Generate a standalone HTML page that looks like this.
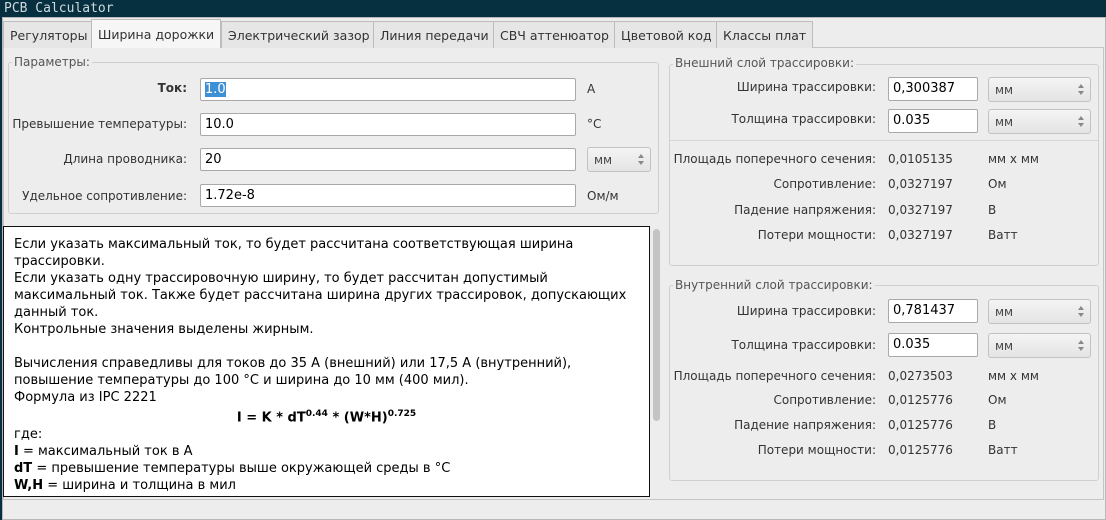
<!DOCTYPE html><html><head><meta charset="utf-8"><style>
*{box-sizing:border-box;margin:0;padding:0}
body{width:1106px;height:520px;background:#06303f;font-family:"DejaVu Sans","Liberation Sans",sans-serif;font-size:12px;color:#333;position:relative;overflow:hidden}
.a{position:absolute;white-space:nowrap}
.title{left:4px;top:1px;color:#cfd8dc;font-family:"DejaVu Sans Mono","Liberation Mono",monospace;font-size:13px}
.win{left:2px;top:17px;width:1104px;height:503px;background:#ededed;border:1px solid #b8b8b8}
.tab{top:21px;height:27px;background:#e6e6e6;border:1px solid #bcbcbc;border-bottom:none;padding:6px 6px 0;color:#333;font-size:12.5px}
.tab.on{top:19px;height:29px;background:#f6f6f6;padding-top:7px}
.page{left:3px;top:47px;width:1101px;height:453px;border:1px solid #c4c4c4;background:#ededed}
.grp{border:1px solid #d0d0d0;border-radius:3px}
.gt{background:#ededed;padding:0 2px;color:#555}
.in{background:#fff;border:1px solid #a9a9a9;border-radius:2px;height:23px;padding:3px 4px;color:#000;font-size:13px}
.cb{background:linear-gradient(#f4f4f4,#e4e4e4);border:1px solid #c2c2c2;border-radius:3px;height:25px;padding:5px 6px;color:#444;font-size:12px}
.cb:after{content:"";position:absolute;right:6px;top:6px;width:0;height:0;border-left:3px solid transparent;border-right:3px solid transparent;border-bottom:4px solid #888;}
.cb:before{content:"";position:absolute;right:6px;top:13px;width:0;height:0;border-left:3px solid transparent;border-right:3px solid transparent;border-top:4px solid #888;}
.lbl{text-align:right}
.ta{left:3px;top:226px;width:647px;height:271px;background:#fff;border:1px solid #111;padding:9px 10px;color:#000;font-size:13px;line-height:17px;white-space:normal}
</style></head><body>
<div class="a title">PCB Calculator</div>
<div class="a win"></div>
<div class="a page"></div>
<div class="a tab" style="left:3px">Регуляторы</div>
<div class="a tab on" style="left:91px">Ширина дорожки</div>
<div class="a tab" style="left:221px">Электрический зазор</div>
<div class="a tab" style="left:373px">Линия передачи</div>
<div class="a tab" style="left:493px">СВЧ аттенюатор</div>
<div class="a tab" style="left:614px">Цветовой код</div>
<div class="a tab" style="left:716px">Классы плат</div>

<div class="a grp" style="left:8px;top:62px;width:651px;height:152px"></div>
<div class="a gt" style="left:12px;top:55px">Параметры:</div>
<div class="a lbl" style="left:20px;width:167px;top:81px;font-weight:bold">Ток:</div>
<div class="a in" style="left:200px;top:78px;width:376px"><span style="background:#3d8fd6;color:#fff">1.0</span></div>
<div class="a" style="left:587px;top:82px">A</div>
<div class="a lbl" style="left:10px;width:177px;top:117px">Превышение температуры:</div>
<div class="a in" style="left:200px;top:113px;width:376px">10.0</div>
<div class="a" style="left:587px;top:117px">°C</div>
<div class="a lbl" style="left:20px;width:167px;top:152px">Длина проводника:</div>
<div class="a in" style="left:200px;top:148px;width:376px">20</div>
<div class="a cb" style="left:587px;top:147px;width:64px">мм</div>
<div class="a lbl" style="left:10px;width:177px;top:189px">Удельное сопротивление:</div>
<div class="a in" style="left:200px;top:184px;width:376px">1.72e-8</div>
<div class="a" style="left:587px;top:189px">Ом/м</div>

<div class="a ta">Если указать максимальный ток, то будет рассчитана соответствующая ширина трассировки.<br>Если указать одну трассировочную ширину, то будет рассчитан допустимый максимальный ток. Также будет рассчитана ширина других трассировок, допускающих данный ток.<br>Контрольные значения выделены жирным.<br><br>Вычисления справедливы для токов до 35 А (внешний) или 17,5 А (внутренний), повышение температуры до 100 °C и ширина до 10 мм (400 мил).<br>Формула из IPC 2221<div style="text-align:center;font-weight:bold">I = K * dT<sup style="font-size:9px">0.44</sup> * (W*H)<sup style="font-size:9px">0.725</sup></div>где:<br><b>I</b> = максимальный ток в A<br><b>dT</b> = превышение температуры выше окружающей среды в °C<br><b>W,H</b> = ширина и толщина в мил</div>
<div class="a" style="left:651px;top:227px;width:11px;height:269px;background:#ededed"></div>
<div class="a" style="left:653px;top:229px;width:7px;height:192px;background:#c4c4c4;border-radius:4px"></div>

<div class="a grp" style="left:669px;top:64px;width:430px;height:202px"></div>
<div class="a gt" style="left:673px;top:56px">Внешний слой трассировки:</div>
<div class="a lbl" style="left:680px;width:196px;top:80px">Ширина трассировки:</div>
<div class="a in" style="left:888px;top:77px;width:90px;height:24px">0,300387</div>
<div class="a cb" style="left:988px;top:77px;width:103px">мм</div>
<div class="a lbl" style="left:680px;width:196px;top:112px">Толщина трассировки:</div>
<div class="a in" style="left:888px;top:109px;width:90px;height:24px">0.035</div>
<div class="a cb" style="left:988px;top:109px;width:103px">мм</div>
<div class="a" style="left:670px;top:140px;width:428px;height:1px;background:#d6d6d6"></div>
<div class="a lbl" style="left:660px;width:216px;top:152px">Площадь поперечного сечения:</div><div class="a" style="left:888px;top:152px">0,0105135</div><div class="a" style="left:988px;top:152px">мм x мм</div>
<div class="a lbl" style="left:660px;width:216px;top:177px">Сопротивление:</div><div class="a" style="left:888px;top:177px">0,0327197</div><div class="a" style="left:988px;top:177px">Ом</div>
<div class="a lbl" style="left:660px;width:216px;top:203px">Падение напряжения:</div><div class="a" style="left:888px;top:203px">0,0327197</div><div class="a" style="left:988px;top:203px">В</div>
<div class="a lbl" style="left:660px;width:216px;top:228px">Потери мощности:</div><div class="a" style="left:888px;top:228px">0,0327197</div><div class="a" style="left:988px;top:228px">Ватт</div>

<div class="a grp" style="left:669px;top:285px;width:430px;height:196px"></div>
<div class="a gt" style="left:673px;top:278px">Внутренний слой трассировки:</div>
<div class="a lbl" style="left:680px;width:196px;top:304px">Ширина трассировки:</div>
<div class="a in" style="left:888px;top:299px;width:90px;height:24px">0,781437</div>
<div class="a cb" style="left:988px;top:299px;width:103px">мм</div>
<div class="a lbl" style="left:680px;width:196px;top:338px">Толщина трассировки:</div>
<div class="a in" style="left:888px;top:333px;width:90px;height:24px">0.035</div>
<div class="a cb" style="left:988px;top:333px;width:103px">мм</div>
<div class="a lbl" style="left:660px;width:216px;top:369px">Площадь поперечного сечения:</div><div class="a" style="left:888px;top:369px">0,0273503</div><div class="a" style="left:988px;top:369px">мм x мм</div>
<div class="a lbl" style="left:660px;width:216px;top:393px">Сопротивление:</div><div class="a" style="left:888px;top:393px">0,0125776</div><div class="a" style="left:988px;top:393px">Ом</div>
<div class="a lbl" style="left:660px;width:216px;top:418px">Падение напряжения:</div><div class="a" style="left:888px;top:418px">0,0125776</div><div class="a" style="left:988px;top:418px">В</div>
<div class="a lbl" style="left:660px;width:216px;top:443px">Потери мощности:</div><div class="a" style="left:888px;top:443px">0,0125776</div><div class="a" style="left:988px;top:443px">Ватт</div>
</body></html>
